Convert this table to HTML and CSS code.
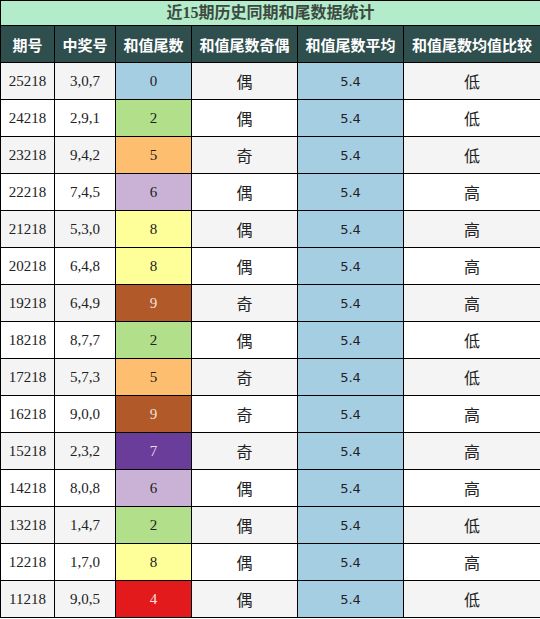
FILE: index.html
```html
<!DOCTYPE html>
<html lang="zh">
<head>
    <meta charset="UTF-8">
    <meta name="viewport" content="width=device-width, initial-scale=1.0">
    <title>近15期历史同期和尾数据统计</title>
    <link rel="stylesheet" href="styles.css">
</head>
<body>
    <!-- 和尾统计表 -->
    <table class="stat-table">
        <colgroup>
            <col class="c-issue">
            <col class="c-win">
            <col class="c-tail">
            <col class="c-odd">
            <col class="c-avg">
            <col class="c-cmp">
        </colgroup>
        <thead>
            <tr class="title-row">
                <th colspan="6">近15期历史同期和尾数据统计</th>
            </tr>
            <tr class="head-row">
                <th>期号</th>
                <th>中奖号</th>
                <th>和值尾数</th>
                <th>和值尾数奇偶</th>
                <th>和值尾数平均</th>
                <th>和值尾数均值比较</th>
            </tr>
        </thead>
        <tbody>
            <tr><td class="num">25218</td><td class="num">3,0,7</td><td class="num t0">0</td><td class="cn">偶</td><td class="avg">5.4</td><td class="cn">低</td></tr>
            <tr><td class="num">24218</td><td class="num">2,9,1</td><td class="num t2">2</td><td class="cn">偶</td><td class="avg">5.4</td><td class="cn">低</td></tr>
            <tr><td class="num">23218</td><td class="num">9,4,2</td><td class="num t5">5</td><td class="cn">奇</td><td class="avg">5.4</td><td class="cn">低</td></tr>
            <tr><td class="num">22218</td><td class="num">7,4,5</td><td class="num t6">6</td><td class="cn">偶</td><td class="avg">5.4</td><td class="cn">高</td></tr>
            <tr><td class="num">21218</td><td class="num">5,3,0</td><td class="num t8">8</td><td class="cn">偶</td><td class="avg">5.4</td><td class="cn">高</td></tr>
            <tr><td class="num">20218</td><td class="num">6,4,8</td><td class="num t8">8</td><td class="cn">偶</td><td class="avg">5.4</td><td class="cn">高</td></tr>
            <tr><td class="num">19218</td><td class="num">6,4,9</td><td class="num t9">9</td><td class="cn">奇</td><td class="avg">5.4</td><td class="cn">高</td></tr>
            <tr><td class="num">18218</td><td class="num">8,7,7</td><td class="num t2">2</td><td class="cn">偶</td><td class="avg">5.4</td><td class="cn">低</td></tr>
            <tr><td class="num">17218</td><td class="num">5,7,3</td><td class="num t5">5</td><td class="cn">奇</td><td class="avg">5.4</td><td class="cn">低</td></tr>
            <tr><td class="num">16218</td><td class="num">9,0,0</td><td class="num t9">9</td><td class="cn">奇</td><td class="avg">5.4</td><td class="cn">高</td></tr>
            <tr><td class="num">15218</td><td class="num">2,3,2</td><td class="num t7">7</td><td class="cn">奇</td><td class="avg">5.4</td><td class="cn">高</td></tr>
            <tr><td class="num">14218</td><td class="num">8,0,8</td><td class="num t6">6</td><td class="cn">偶</td><td class="avg">5.4</td><td class="cn">高</td></tr>
            <tr><td class="num">13218</td><td class="num">1,4,7</td><td class="num t2">2</td><td class="cn">偶</td><td class="avg">5.4</td><td class="cn">低</td></tr>
            <tr><td class="num">12218</td><td class="num">1,7,0</td><td class="num t8">8</td><td class="cn">偶</td><td class="avg">5.4</td><td class="cn">高</td></tr>
            <tr><td class="num">11218</td><td class="num">9,0,5</td><td class="num t4">4</td><td class="cn">偶</td><td class="avg">5.4</td><td class="cn">低</td></tr>
        </tbody>
    </table>
</body>
</html>
```

FILE: styles.css
```css
/* 基础 */
body {
    margin: 0;
    padding: 0;
    background: #ffffff;
    font-family: "Noto Sans CJK SC", sans-serif;
}

.stat-table {
    width: 540px;
    border-collapse: collapse;
    table-layout: fixed;
}

.c-issue { width: 54px; }
.c-win { width: 61px; }
.c-tail { width: 76px; }
.c-odd { width: 106px; }
.c-avg { width: 106px; }
.c-cmp { width: 137px; }

.stat-table th,
.stat-table td {
    border: 1px solid #000;
    padding: 0;
    text-align: center;
    overflow: hidden;
    white-space: nowrap;
}

/* 标题 */
.title-row th {
    height: 24px;
    background: #b3ecca;
    color: #3d4a42;
    font-size: 16px;
    font-weight: bold;
    font-family: "Liberation Serif", "Noto Sans CJK SC", serif;
    line-height: 24px;
}

.head-row th {
    height: 36px;
    background: #2f4f4f;
    color: #ffffff;
    font-size: 15px;
    font-weight: bold;
}

/* 数据行 */
.stat-table td {
    height: 36px;
    color: #222;
}

.stat-table tbody tr:nth-child(odd) { background: #f4f4f4; }
.stat-table tbody tr:nth-child(even) { background: #ffffff; }

.num {
    font-family: "Liberation Serif", serif;
    font-size: 15px;
}

.cn {
    font-size: 16px;
}

.avg {
    background: #a6cee3;
    font-family: "DejaVu Sans", sans-serif;
    font-size: 13px;
    color: #333;
}

/* 和值尾数颜色 */
.t0 { background: #a6cee3; }
.t2 { background: #b2df8a; }
.t5 { background: #fdbf6f; }
.t6 { background: #cab2d6; }
.t8 { background: #ffff99; }
.t9 { background: #b15928; }
.t7 { background: #6a3d9a; }
.t4 { background: #e31a1c; }

.stat-table td.t9 { color: #f0e0d8; }
.stat-table td.t7 { color: #e6dcf0; }
.stat-table td.t4 { color: #fbe0e0; }
```
